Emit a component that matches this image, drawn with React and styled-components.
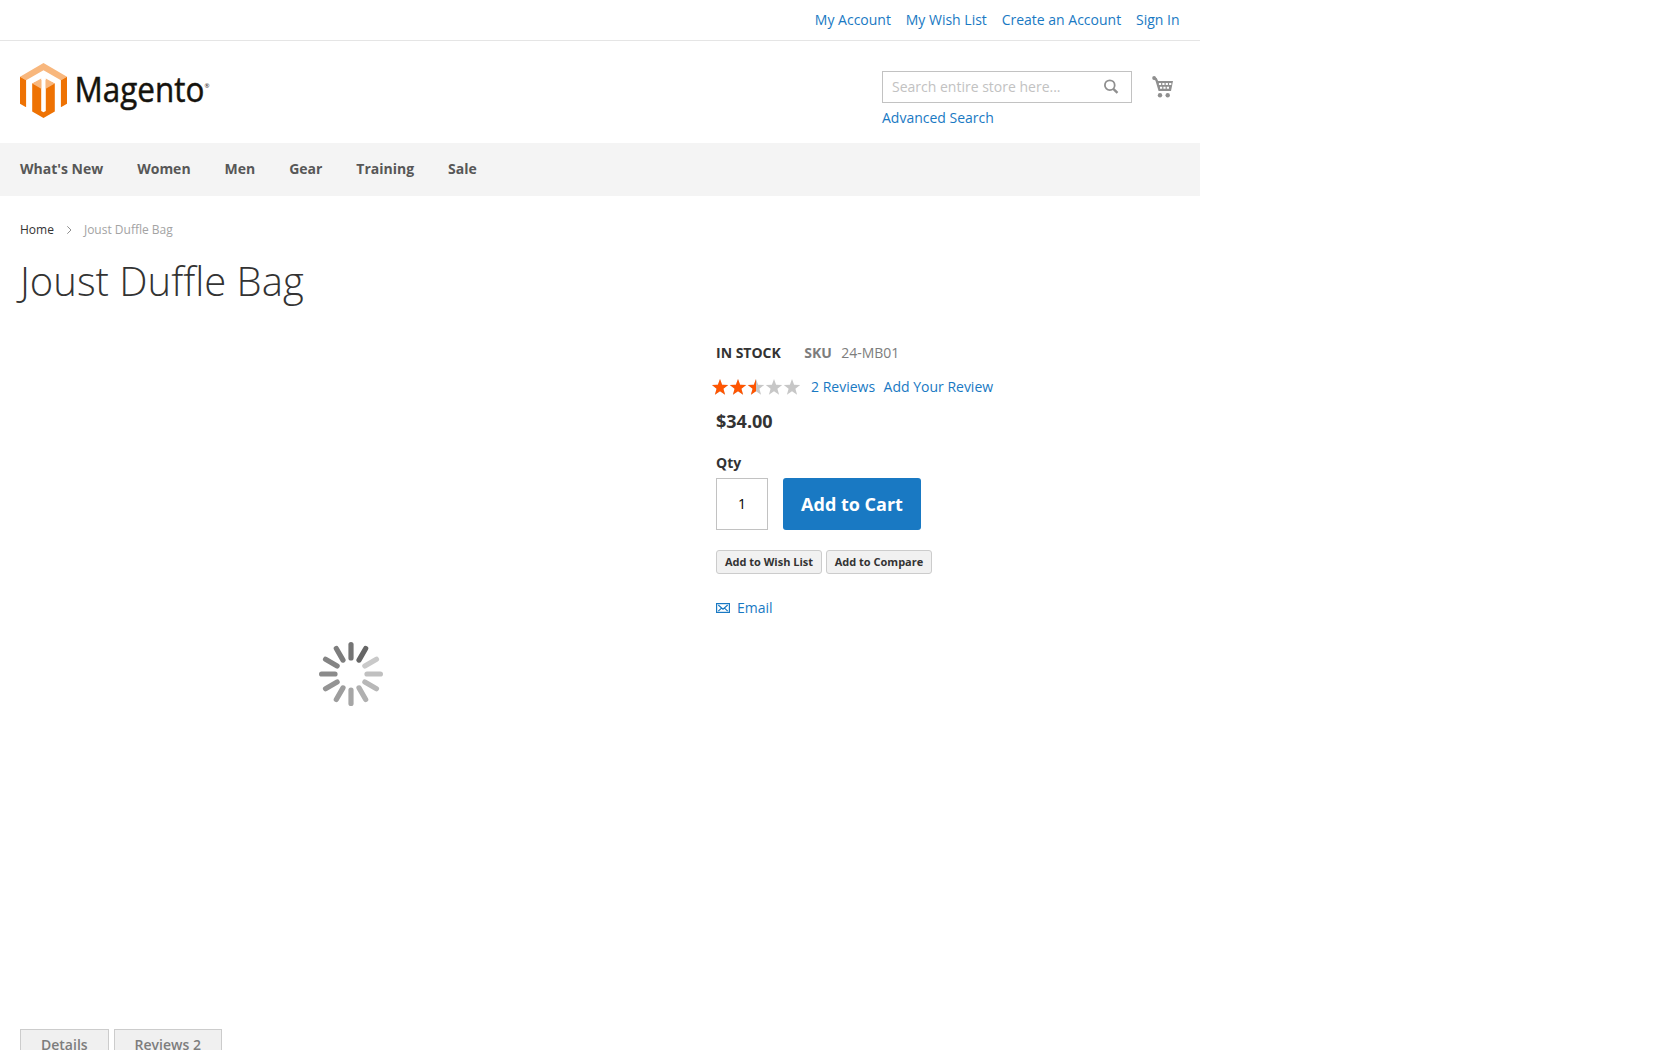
import React from 'react';
import styled, { createGlobalStyle } from 'styled-components';

const Global = createGlobalStyle`
  *, *::before, *::after { box-sizing: border-box; }
  html, body { margin: 0; padding: 0; background: #fff; }
  body {
    height: 1050px;
    overflow: hidden;
    font-family: "Open Sans", "Noto Sans", sans-serif;
    font-size: 14px;
    line-height: 20px;
    color: #333;
  }
`;

const Page = styled.div`
  width: 1200px;
  height: 1050px;
  overflow: hidden;
`;

const Link = styled.a`
  color: #1979c3;
  text-decoration: none;
  white-space: nowrap;
`;

const TopBar = styled.div`
  display: flex;
  justify-content: flex-end;
  gap: 14.8px;
  height: 41px;
  padding: 10px 20.5px 0 0;
  border-bottom: 1px solid #e5e5e5;
`;

const Header = styled.header`
  display: flex;
  justify-content: space-between;
  height: 102px;
  padding: 22px 26px 0 20px;
`;

const HeaderTools = styled.div`
  display: flex;
  align-items: flex-start;
  gap: 20px;
  padding-top: 8px;
`;

const SearchForm = styled.form`
  width: 250px;
  display: flex;
  flex-direction: column;
  gap: 5px;
  margin: 0;
`;

const SearchField = styled.div`
  display: flex;
  align-items: center;
  height: 32px;
  padding: 0 12px 0 9px;
  border: 1px solid #c2c2c2;
`;

const SearchInput = styled.input`
  flex: 1;
  min-width: 0;
  padding: 0;
  border: 0;
  outline: 0;
  background: none;
  font: inherit;
  color: #333;
  &::placeholder { color: #c2c2c2; opacity: 1; }
`;

const Cart = styled.div`
  height: 22px;
  margin-top: 5px;
  line-height: 0;
`;

const Nav = styled.nav`
  display: flex;
  gap: 33.95px;
  height: 53px;
  padding: 16px 20px;
  background: #f4f4f4;
`;

const NavItem = styled.a`
  font-weight: 700;
  color: #575757;
`;

const Crumbs = styled.div`
  display: flex;
  align-items: center;
  height: 16px;
  margin: 26px 20px 0;
  font-size: 12px;
  line-height: 16px;
  color: #a3a3a3;
`;

const Crumb = styled.a`
  color: #333;
`;

const Chevron = styled.svg`
  margin: 0 12px 0 13px;
`;

const Title = styled.h1`
  margin: 21px 20px 0;
  height: 44px;
  font-size: 40px;
  font-weight: 300;
  line-height: 44px;
`;

const Product = styled.main`
  display: grid;
  grid-template-columns: 662px 1fr;
  column-gap: 34px;
  height: 686px;
  margin: 40px 20px 0;
`;

const Media = styled.div`
  display: flex;
  justify-content: center;
  padding-top: 299px;
`;

const Info = styled.section`
  display: flex;
  flex-direction: column;
  align-items: flex-start;
`;

const StockRow = styled.div`
  display: flex;
  color: #7d7d7d;
`;

const Stock = styled.strong`
  margin-right: 23.4px;
  color: #333;
`;

const Sku = styled.strong`
  margin-right: 9.3px;
`;

const ReviewRow = styled.div`
  display: flex;
  align-items: center;
  height: 20px;
  margin: 14px 0 0 -4px;
`;

const ReviewLinks = styled.div`
  display: flex;
  gap: 8.5px;
  margin-left: 10px;
`;

const Price = styled.div`
  margin-top: 14px;
  font-size: 18px;
  font-weight: 700;
`;

const QtyLabel = styled.label`
  margin-top: 22px;
  font-weight: 700;
`;

const BuyRow = styled.div`
  display: flex;
  gap: 15px;
  margin-top: 5px;
`;

const QtyInput = styled.input`
  width: 52px;
  height: 52px;
  padding: 0 0 2px;
  border: 1px solid #c2c2c2;
  background: #fff;
  font: inherit;
  color: #000;
  text-align: center;
`;

const CartButton = styled.button`
  width: 138px;
  height: 52px;
  padding: 0;
  border: 0;
  border-radius: 3px;
  background: #1979c3;
  font: inherit;
  font-size: 18px;
  font-weight: 700;
  color: #fff;
`;

const ActionRow = styled.div`
  display: flex;
  gap: 4px;
  margin-top: 20px;
`;

const SmallButton = styled.button`
  width: 106px;
  height: 24px;
  padding: 0;
  border: 1px solid #ccc;
  border-radius: 3px;
  background: #f1f1f1;
  font: inherit;
  font-size: 11px;
  font-weight: 700;
  line-height: 16px;
  color: #333;
  white-space: nowrap;
`;

const EmailLink = styled(Link)`
  display: flex;
  align-items: center;
  gap: 7px;
  margin-top: 24px;
`;

const Tabs = styled.div`
  display: flex;
  gap: 5px;
  padding: 0 20px;
`;

const Tab = styled.a`
  height: 42px;
  padding: 5px 20px;
  border: 1px solid #ccc;
  background: #f0f0f0;
  font-weight: 600;
  color: #7d7d7d;
`;

const LogoMark = styled.svg`
  display: block;
  overflow: visible;
`;

function Logo() {
  return (
    <LogoMark width="192" height="58" viewBox="0 0 192 58" role="img" aria-label="Magento">
      <path fill="#f8b77d" d="M23.5 0L47 13.7L40.9 17.3L23.5 7.3L6.1 17.3L0 13.7Z" />
      <path fill="#ee7203" d="M0 13.7L6.1 17.3V44.3L0 40.7ZM47 13.7L40.9 17.3V44.3L47 40.7Z" />
      <path fill="#ee7203" d="M12.2 20.6L21.2 17V48L23.5 49.3L25.8 48V17L34.8 20.6V48.5L23.5 55L12.2 48.5Z" />
      <path fill="#f8b77d" d="M12.2 20.6L21.2 15.6V25.8ZM34.8 20.6L25.8 15.6V25.8Z" />
      <text x="54.6" y="39.3" fill="#15130d" stroke="#15130d" strokeWidth=".5" fontFamily="Open Sans, Noto Sans, sans-serif" fontSize="35" fontWeight="500" textLength="129.8" lengthAdjust="spacingAndGlyphs">Magento</text>
      <text x="184.6" y="24.5" fill="#15130d" fontFamily="Open Sans, sans-serif" fontSize="6">®</text>
    </LogoMark>
  );
}

function SearchIcon() {
  return (
    <svg width="16" height="16" viewBox="0 0 16 16" fill="none" stroke="#8f8f8f">
      <circle cx="6.8" cy="6.2" r="4.9" strokeWidth="1.8" />
      <path d="M10.3 9.8L14.5 13.8" strokeWidth="2.4" />
    </svg>
  );
}

function CartIcon() {
  return (
    <svg width="22" height="22" viewBox="0 0 22 22" fill="#8f8f8f">
      <circle cx="2.1" cy="2" r="1.9" />
      <path d="M2 .8L4.7 2.1L6.1 5H21L19 15H6.6L3.4 4.5L1.5 3.5Z" />
      <path stroke="#fff" strokeWidth="1.9" strokeDasharray="2.2 1.2" d="M6.9 8H19.3M8 11.8H18" />
      <circle cx="8" cy="19.2" r="2.2" />
      <circle cx="15.7" cy="19.2" r="2.2" />
    </svg>
  );
}

const STAR = 'M8 0L10.1 5.7L16.2 5.9L11.4 9.7L13.1 15.8L8 12.3L2.9 15.8L4.6 9.7L-.2 5.9L5.9 5.7Z';

function Stars() {
  const row = [0, 1, 2, 3, 4];
  return (
    <svg width="89" height="16" viewBox="0 0 89 16">
      <defs>
        <clipPath id="rated"><rect width="44" height="16" /></clipPath>
      </defs>
      <g fill="#c7c7c7">
        {row.map((i) => <path key={i} d={STAR} transform={`translate(${i * 18} 0)`} />)}
      </g>
      <g fill="#ff5501" clipPath="url(#rated)">
        {row.map((i) => <path key={i} d={STAR} transform={`translate(${i * 18} 0)`} />)}
      </g>
    </svg>
  );
}

const SPOKES = ['#757575', '#666', '#c9c9c9', '#c0c0c0', '#b8b8b8', '#b0b0b0', '#a6a6a6', '#9d9d9d', '#949494', '#8b8b8b', '#848484', '#7d7d7d'];

function Spinner() {
  return (
    <svg width="64" height="64" viewBox="-32 -32 64 64">
      {SPOKES.map((color, i) => (
        <path key={i} d="M0 -29.4V-16" stroke={color} strokeWidth="5.2" strokeLinecap="round" transform={`rotate(${i * 30})`} />
      ))}
    </svg>
  );
}

function MailIcon() {
  return (
    <svg width="14" height="10" viewBox="0 0 14 10" fill="none" stroke="#1979c3" strokeWidth="1.2">
      <rect x=".6" y=".6" width="12.8" height="8.8" />
      <path d="M2.3 2L7 6.2L11.7 2M2.3 8.2L5.2 5.3M11.7 8.2L8.8 5.3" />
    </svg>
  );
}

export default function App() {
  return (
    <Page>
      <Global />
      <TopBar>
        {['My Account', 'My Wish List', 'Create an Account', 'Sign In'].map((t) => <Link key={t}>{t}</Link>)}
      </TopBar>
      <Header>
        <Logo />
        <HeaderTools>
          <SearchForm>
            <SearchField>
              <SearchInput placeholder="Search entire store here..." />
              <SearchIcon />
            </SearchField>
            <Link>Advanced Search</Link>
          </SearchForm>
          <Cart><CartIcon /></Cart>
        </HeaderTools>
      </Header>
      <Nav>
        {["What's New", 'Women', 'Men', 'Gear', 'Training', 'Sale'].map((t) => <NavItem key={t}>{t}</NavItem>)}
      </Nav>
      <Crumbs>
        <Crumb>Home</Crumb>
        <Chevron width="5" height="8" viewBox="0 0 5 8" fill="none" stroke="#8f8f8f">
          <path d="M.3 .3L4 4L.3 7.7" />
        </Chevron>
        <span>Joust Duffle Bag</span>
      </Crumbs>
      <Title>Joust Duffle Bag</Title>
      <Product>
        <Media><Spinner /></Media>
        <Info>
          <StockRow>
            <Stock>IN STOCK</Stock>
            <Sku>SKU</Sku>
            <span>24-MB01</span>
          </StockRow>
          <ReviewRow>
            <Stars />
            <ReviewLinks>
              <Link>2 Reviews</Link>
              <Link>Add Your Review</Link>
            </ReviewLinks>
          </ReviewRow>
          <Price>$34.00</Price>
          <QtyLabel htmlFor="qty">Qty</QtyLabel>
          <BuyRow>
            <QtyInput id="qty" defaultValue="1" />
            <CartButton>Add to Cart</CartButton>
          </BuyRow>
          <ActionRow>
            <SmallButton>Add to Wish List</SmallButton>
            <SmallButton>Add to Compare</SmallButton>
          </ActionRow>
          <EmailLink><MailIcon />Email</EmailLink>
        </Info>
      </Product>
      <Tabs>
        <Tab>Details</Tab>
        <Tab>Reviews 2</Tab>
      </Tabs>
    </Page>
  );
}
